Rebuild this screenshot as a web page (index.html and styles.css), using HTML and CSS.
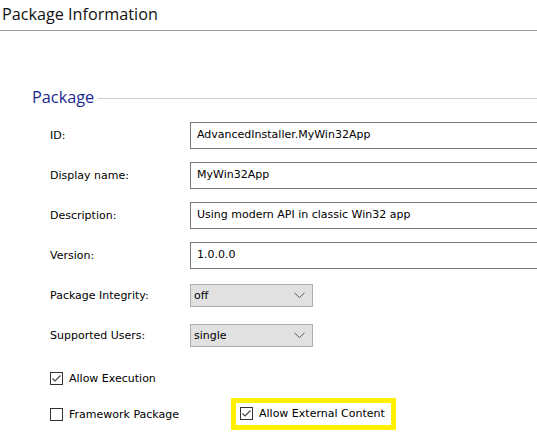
FILE: index.html
```html
<!DOCTYPE html>
<html>
<head>
<meta charset="utf-8">
<link rel="stylesheet" href="styles.css">
</head>
<body>
<div class="page">
  <div class="header">Package Information</div>
  <div class="group">
    <div class="group-title"><span class="group-label">Package</span><span class="group-line"></span></div>
    <div class="form">
      <div class="row"><span class="label">ID:</span><div class="input">AdvancedInstaller.MyWin32App</div></div>
      <div class="row"><span class="label">Display name:</span><div class="input">MyWin32App</div></div>
      <div class="row"><span class="label">Description:</span><div class="input">Using modern API in classic Win32 app</div></div>
      <div class="row"><span class="label">Version:</span><div class="input">1.0.0.0</div></div>
      <div class="row row-sel"><span class="label">Package Integrity:</span><div class="select"><span>off</span><svg class="chev" width="11" height="7" viewBox="0 0 11 7"><path d="M0.5 0.8 L5.5 5.6 L10.5 0.8" fill="none" stroke="#555" stroke-width="1"/></svg></div></div>
      <div class="row row-sel"><span class="label">Supported Users:</span><div class="select"><span>single</span><svg class="chev" width="11" height="7" viewBox="0 0 11 7"><path d="M0.5 0.8 L5.5 5.6 L10.5 0.8" fill="none" stroke="#555" stroke-width="1"/></svg></div></div>
    </div>
    <div class="checks">
      <div class="check"><span class="box"><svg width="13" height="13" viewBox="0 0 13 13"><path d="M2.5 6.5 L5 9 L10.5 3.5" fill="none" stroke="#444" stroke-width="1.2"/></svg></span>Allow Execution</div>
      <div class="check-row">
        <div class="check fw"><span class="box"></span>Framework Package</div>
        <div class="highlight"><div class="check"><span class="box"><svg width="13" height="13" viewBox="0 0 13 13"><path d="M2.5 6.5 L5 9 L10.5 3.5" fill="none" stroke="#444" stroke-width="1.2"/></svg></span>Allow External Content</div></div>
      </div>
    </div>
  </div>
</div>
</body>
</html>
```
FILE: styles.css
```css
html, body { margin: 0; padding: 0; background: #fff; }
.page {
  width: 537px;
  height: 437px;
  overflow: hidden;
  font-family: "DejaVu Sans", sans-serif;
  font-size: 11px;
  color: #000;
}
.header {
  font-family: "Open Sans", "Noto Sans", sans-serif;
  font-size: 16.2px;
  color: #111;
  height: 30px;
  line-height: 28px;
  padding-left: 2px;
  border-bottom: 1px solid #999;
}
.group { padding-left: 32px; padding-top: 54px; }
.group-title { display: flex; align-items: center; height: 24px; }
.group-label {
  font-family: "Open Sans", "Noto Sans", sans-serif;
  font-size: 16.3px;
  color: #1e2a8c;
  padding-right: 4px;
}
.group-line { flex: 1; height: 1px; background: #ccc; margin-top: 2px; }
.form { padding-left: 18px; padding-top: 13px; display: flex; flex-direction: column; gap: 13px; }
.row { display: grid; grid-template-columns: 140px 360px; align-items: center; height: 27px; }
.row-sel { height: 23px; margin-top: 2px; }
.row-sel + .row-sel { margin-top: 4px; }
.label { font-size: 11px; }
.input {
  border: 1px solid #7a7a7a;
  box-sizing: border-box;
  height: 27px;
  padding: 4px 6px 0;
  font-size: 11px;
  line-height: 16px;
}
.select {
  width: 123px;
  height: 23px;
  box-sizing: border-box;
  border: 1px solid #adadad;
  background: #e1e1e1;
  display: flex;
  align-items: center;
  justify-content: space-between;
  padding: 0 7px 0 3px;
  font-size: 11px;
}
.checks { padding-left: 18px; padding-top: 24px; display: flex; flex-direction: column; gap: 12px; }
.check { display: flex; align-items: center; gap: 6px; font-size: 11px; height: 15px; }
.box { width: 13px; height: 13px; border: 1px solid #333; box-sizing: border-box; display: flex; background: #fff; }
.box svg { margin: -1px; }
.check-row { display: flex; align-items: center; }
.fw { width: 181px; }
.highlight { border: 5px solid #ffef00; padding: 3px 6px 4px 4px; }
```
